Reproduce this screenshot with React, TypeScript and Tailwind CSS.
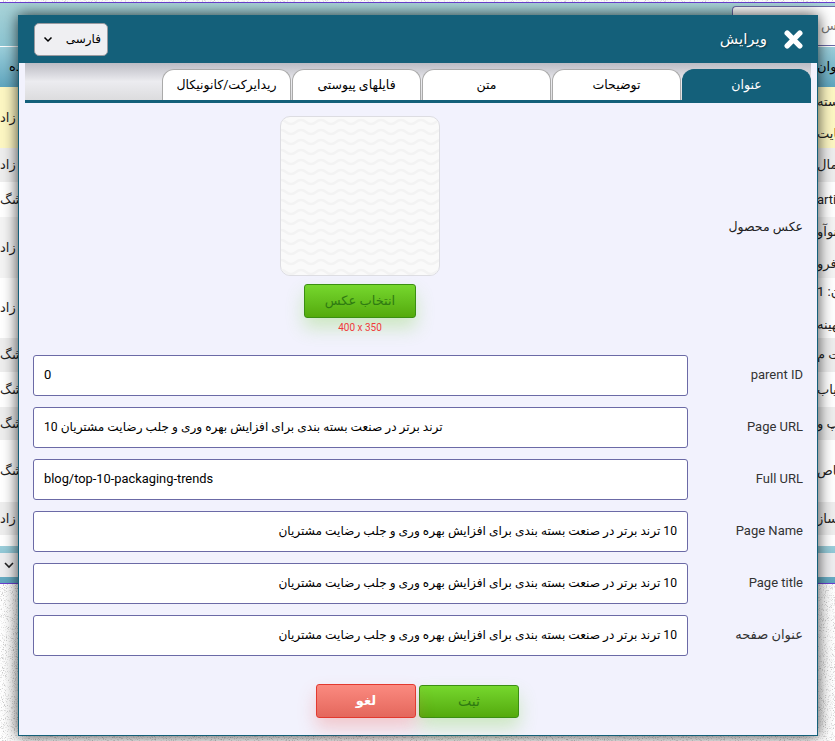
const bgRows = [
  { h: "h-[61px]", bg: "bg-[#fdf7c3]", left: "زاد", right: ["بسته", "ضایت"] },
  { h: "h-[34px]", bg: "bg-[#eeeeee]", left: "زاد", right: ["مال"] },
  { h: "h-[35px]", bg: "bg-white", left: "شگ", right: ["articl"] },
  { h: "h-[61px]", bg: "bg-[#f4f4f4]", left: "زاد", right: ["نوآو", "فرو"] },
  { h: "h-[60px]", bg: "bg-white", left: "زاد", right: ["ن: 1", "بهینه"] },
  { h: "h-[34px]", bg: "bg-[#eeeeee]", left: "شگ", right: ["ت م"] },
  { h: "h-[35px]", bg: "bg-white", left: "شگ", right: ["اریاب"] },
  { h: "h-[33px]", bg: "bg-[#eeeeee]", left: "شگ", right: ["پ و"] },
  { h: "h-[62px]", bg: "bg-white", left: "شگ", right: ["صاص"] },
  { h: "h-[33px]", bg: "bg-[#eeeeee]", left: "زاد", right: ["ساز"] },
  { h: "h-[11px]", bg: "bg-white", left: "", right: [] },
];

const tabs = ["عنوان", "توضیحات", "متن", "فایلهای پیوستی", "ریدایرکت/کانونیکال"];

const longTitle = "10 ترند برتر در صنعت بسته بندی برای افزایش بهره وری و جلب رضایت مشتریان";

const fields = [
  { label: "parent ID", value: "0", dir: "ltr", size: "text-[13px]" },
  { label: "Page URL", value: longTitle, dir: "ltr", size: "text-[12.15px]" },
  { label: "Full URL", value: "blog/top-10-packaging-trends", dir: "ltr", size: "text-[12.85px]" },
  { label: "Page Name", value: longTitle, dir: "rtl", size: "text-[12.15px]" },
  { label: "Page title", value: longTitle, dir: "rtl", size: "text-[12.15px]" },
  { label: "عنوان صفحه", value: longTitle, dir: "rtl", size: "text-[12.15px]" },
];

const Noise = () => (
  <svg className="absolute inset-0 h-full w-full" aria-hidden="true">
    <filter id="speckle">
      <feTurbulence type="fractalNoise" baseFrequency="0.9" numOctaves="2" seed="4" />
      <feColorMatrix values="0 0 0 0 0.6  0 0 0 0 0.6  0 0 0 0 0.6  4 0 0 0 -2.15" />
    </filter>
    <rect width="100%" height="100%" filter="url(#speckle)" />
  </svg>
);

const Waves = () => (
  <svg className="absolute inset-0 h-full w-full" aria-hidden="true">
    <pattern id="waves" width="20" height="10" patternUnits="userSpaceOnUse">
      <path d="M0 3 C5 3 5 7 10 7 C15 7 15 3 20 3" fill="none" stroke="#f3f3f3" strokeWidth="2.5" />
    </pattern>
    <rect width="100%" height="100%" fill="url(#waves)" />
  </svg>
);

export default function App() {
  return (
    <div className="relative h-[741px] w-[835px] overflow-hidden bg-white font-['Roboto','DejaVu_Sans',sans-serif]">
      {/* page behind the dialog */}
      <div className="relative h-[2px] overflow-hidden bg-white">
        <Noise />
      </div>
      <div className="h-[1px] bg-[#6a3fd0]" />
      <div className="flex h-[43px] justify-end bg-gradient-to-b from-[#a9d3d8] to-[#8cc5d2]">
        <div className="mt-[3px] flex w-[103px] items-center rounded-tl-[4px] border border-r-0 border-[#6b6aa6] bg-white pl-[88px] text-[13px] text-[#777]" dir="ltr">
          <span className="whitespace-nowrap">جس</span>
        </div>
      </div>
      <div className="h-[1px] bg-white" />
      <div className="flex h-[40px] items-center justify-between bg-gradient-to-b from-[#9ccfdb] to-[#5fa6bf] text-[13px] text-black">
        <span className="pl-[9px]">ده</span>
        <span className="w-[18px] overflow-hidden whitespace-nowrap">عنوان</span>
      </div>
      {bgRows.map((row, i) => (
        <div key={i} className={`flex items-center justify-between text-[13px] text-[#222] ${row.h} ${row.bg}`}>
          <span className="whitespace-nowrap">{row.left}</span>
          <div className="flex w-[18px] flex-col gap-[13px] overflow-hidden">
            {row.right.map((line) => (
              <span key={line} className="whitespace-nowrap">{line}</span>
            ))}
          </div>
        </div>
      ))}
      <div className="flex h-[37px] items-center bg-gradient-to-b from-[#9ccfdb] to-[#5fa6bf]">
        <div className="flex h-[24px] w-full items-center bg-[#eeeef0] pl-[3px] text-[#222]">
          <svg width="12" height="12" viewBox="0 0 12 12" fill="none" stroke="currentColor" strokeWidth="1.6">
            <path d="M2 4l4 4 4-4" />
          </svg>
        </div>
      </div>
      <div className="h-[1px] bg-[#6a3fd0]" />
      <div className="relative h-[157px]">
        <Noise />
      </div>

      {/* dialog */}
      <div
        dir="rtl"
        className="absolute left-[18px] top-[15px] flex h-[721px] w-[800px] flex-col border-x border-b border-[#14607a] bg-[#f2f2fd] shadow-[0_0_14px_rgba(0,0,0,0.75)]"
      >
        <div className="-mx-[1px] flex h-[48px] shrink-0 items-center bg-[#14607a] pl-[16px] pr-[15px]">
          <svg width="19" height="19" viewBox="0 0 19 19" fill="none" stroke="white" strokeWidth="5.4" strokeLinecap="round">
            <path d="M3.2 3.2l12.6 12.6M15.8 3.2L3.2 15.8" />
          </svg>
          <span className="mr-[17px] text-[15px] text-white [text-shadow:1px_1px_2px_rgba(0,0,0,0.5)]">ویرایش</span>
          <div className="mr-auto flex h-[33px] w-[74px] items-center justify-between rounded-[5px] border border-[#9a9aa0] bg-[#efeff2] pl-[7px] pr-[6px] text-[12px] text-black">
            <span>فارسی</span>
            <svg width="12" height="12" viewBox="0 0 12 12" fill="none" stroke="black" strokeWidth="1.5">
              <path d="M2.5 4.5L6 8l3.5-3.5" />
            </svg>
          </div>
        </div>

        <div className="ml-[6px] mr-[6px] flex h-[40px] shrink-0 items-end gap-[1px] border-b-[3px] border-[#14607a] bg-gradient-to-b from-[#bcbcc4] via-[#ececf0] to-[#dcdcde]">
          {tabs.map((tab, i) => (
            <div
              key={tab}
              className={`flex h-[31px] w-[129px] items-center justify-center rounded-t-[12px] border border-b-0 text-[12.5px] ${
                i === 0 ? "border-[#14607a] bg-[#14607a] text-white" : "border-[#aaaaaa] bg-white text-black"
              }`}
            >
              {tab}
            </div>
          ))}
        </div>

        <div className="flex shrink-0 pt-[13px]">
          <div className="w-[129px] shrink-0 pr-[14px] pt-[102px] text-[12.5px] text-[#222]">عکس محصول</div>
          <div className="flex w-[655px] flex-col items-center pr-[1px]">
            <div className="relative h-[160px] w-[160px] overflow-hidden rounded-[10px] border border-[#dddde2] bg-[#fafafa]">
              <Waves />
            </div>
            <button className="mt-[8px] h-[34px] w-[112px] rounded-[3px] border border-[#3b8f12] bg-gradient-to-b from-[#76d72d] to-[#54aa0b] text-[13px] text-[#2f7a12] shadow-[0_10px_18px_rgba(120,210,60,0.3)]">
              انتخاب عکس
            </button>
            <span dir="ltr" className="mt-[4px] text-[10px] leading-[12px] text-[#f03a3a]">400 x 350</span>
          </div>
        </div>

        <div className="mt-[21px] flex flex-col gap-[11px]">
          {fields.map((f) => (
            <div key={f.label} className="flex h-[41px] items-center">
              <label className="w-[129px] shrink-0 pb-[2px] pr-[14px] text-[13px] text-[#333]">{f.label}</label>
              <input
                readOnly
                dir={f.dir}
                value={f.value}
                className={`h-[41px] w-[655px] rounded-[3px] border border-[#6b6aa6] bg-white px-[10px] pb-[2px] text-black outline-none ${f.size}`}
              />
            </div>
          ))}
        </div>

        <div className="mt-[28px] flex items-end gap-[3px] pr-[298px]">
          <button className="h-[33px] w-[100px] rounded-[3px] border border-[#3b8f12] bg-gradient-to-b from-[#76d72d] to-[#54aa0b] text-[14px] text-[#2f7a12] shadow-[0_10px_18px_rgba(120,210,60,0.3)]">
            ثبت
          </button>
          <button className="h-[34px] w-[100px] rounded-[3px] border border-[#e2392f] bg-gradient-to-b from-[#fb8a80] to-[#e4675c] text-[13px] font-bold text-white shadow-[0_10px_18px_rgba(240,90,80,0.28)]">
            لغو
          </button>
        </div>
      </div>
    </div>
  );
}
